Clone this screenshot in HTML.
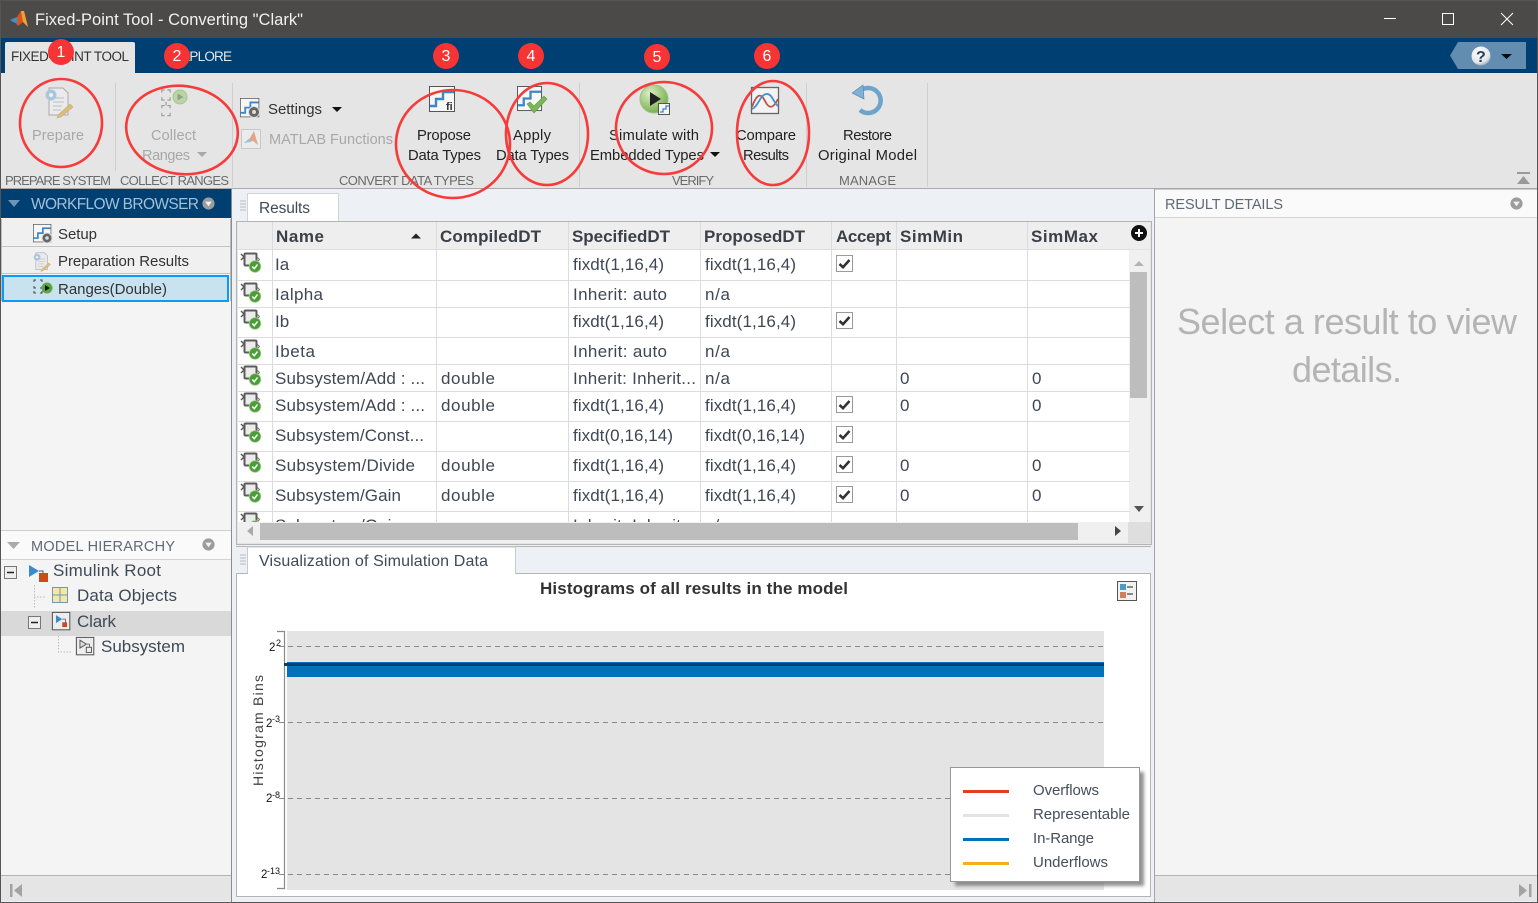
<!DOCTYPE html>
<html><head><meta charset="utf-8"><title>Fixed-Point Tool</title>
<style>html,body{margin:0;padding:0;background:#edf0f5;overflow:hidden}svg{display:block;font-family:"Liberation Sans",sans-serif}</style>
</head><body>
<svg xmlns="http://www.w3.org/2000/svg" width="1538" height="903" viewBox="0 0 1538 903">
<defs>
<symbol id="ri" viewBox="0 0 22 22" overflow="visible">
<path d="M1 2l3 3-3 3" fill="none" stroke="#555" stroke-width="1.400"/>
<rect x="4.500" y="1.500" width="12" height="12" rx="1" fill="#ececec" stroke="#5c5c5c" stroke-width="2"/>
<path d="M17 5l2.500 2.500-2.500 2.500" fill="none" stroke="#777"/>
<circle cx="15" cy="14.500" r="5.800" fill="#4a9e38" stroke="#a9cf92" stroke-width=".8"/>
<path d="M12.300 14.500l2 2.200 3.200-4.200" fill="none" stroke="#fff" stroke-width="1.500"/>
</symbol>
<symbol id="cb" viewBox="0 0 18 18" overflow="visible">
<rect x=".5" y=".5" width="16" height="16" fill="#fff" stroke="#9a9a9a"/>
<path d="M3.500 9l3.500 3.200 6.500-7.200" fill="none" stroke="#333" stroke-width="2.600"/>
</symbol>
<symbol id="stp" viewBox="0 0 27 27" overflow="visible">
<rect x=".5" y=".5" width="25" height="25" fill="#f7f7f7" stroke="#555"/>
<path d="M1 20h6v-7h7V6h11" fill="none" stroke="#3d86c8" stroke-width="2.400"/>
</symbol>
<symbol id="tdn" viewBox="0 0 16 16" overflow="visible">
<circle cx="8" cy="8" r="6.500" fill="#9c9c9c"/><path d="M4.500 6h7L8 11z" fill="#f2f2f2"/>
</symbol>
<symbol id="doc" viewBox="0 0 32 34" overflow="visible">
<path d="M6 3h14l5 5v22H6z" fill="#e9ebee" stroke="#aaa"/>
<path d="M10 13h11M10 17h11M10 21h9M10 25h8" stroke="#bcbcbc"/>
<circle cx="8" cy="10" r="5.500" fill="#a9c6dc"/><circle cx="8" cy="10" r="2" fill="#eef0f2"/>
<path d="M15 30l12-11 3 3-12 10-4 1z" fill="#ddbd7e" stroke="#c8ad77" stroke-width=".6"/>
</symbol>
<symbol id="rng" viewBox="0 0 30 30" overflow="visible">
<path d="M2 4V1h3M8 1h3v3M2 9v3h3M8 12h3V9M6.500 14v4M2 21v-3h3M8 18h3v3M2 26v3h3M8 29h3v-3" transform="scale(.92)" fill="none" stroke="#999" stroke-width="1.200"/>
<circle cx="20" cy="8" r="7" fill="#b9d5a3" stroke="#a8c495"/><path d="M17.500 4.500l6 3.500-6 3.500z" fill="#969e90"/>
</symbol>
<symbol id="mdl" viewBox="0 0 24 24" overflow="visible">
<rect x=".5" y=".5" width="22" height="22" fill="#ededed" stroke="#555" stroke-width="1.300"/>
<path d="M5 4l8 5-8 5z" fill="#3a8cc9"/><path d="M13 9h4v5" fill="none" stroke="#555"/>
<rect x="13" y="13" width="6" height="6" fill="#c8491f"/>
</symbol>
<symbol id="sub" viewBox="0 0 24 24" overflow="visible">
<rect x=".5" y=".5" width="22" height="22" fill="#ededed" stroke="#555" stroke-width="1.300"/>
<path d="M5 4l8 5-8 5z" fill="#ddd" stroke="#555" stroke-width="1.200"/><path d="M13 9h4v5" fill="none" stroke="#555"/>
<rect x="13" y="13" width="6.500" height="6.500" fill="#eee" stroke="#555" stroke-width="1.200"/>
</symbol>
<radialGradient id="hp" cx=".4" cy=".3" r=".8"><stop offset="0" stop-color="#fff"/><stop offset=".7" stop-color="#dfe6ec"/><stop offset="1" stop-color="#7e8a94"/></radialGradient>
<radialGradient id="pl" cx=".35" cy=".3" r=".8"><stop offset="0" stop-color="#dcefc6"/><stop offset="1" stop-color="#6aa83f"/></radialGradient>
</defs>

<!-- frame -->
<rect width="1538" height="903" fill="#edf0f5"/>
<!-- title -->
<rect width="1538" height="38" fill="#4c4a48"/>
<polygon points="10,20 17,17 21,11 24,11 28,27 23,22 18,26 15,22" fill="#d9541a"/>
<polygon points="10,20 17,17 18,22 15,23" fill="#3f8fcb"/>
<polygon points="21,11 24,11 28,27 23,22" fill="#f2a035"/>
<text x="35" y="25" font-size="16.500" fill="#f1f1f1" textLength="268" lengthAdjust="spacing">Fixed-Point Tool - Converting "Clark"</text>
<path d="M1384 18.500h12" stroke="#fff" stroke-width="1"/>
<rect x="1442.500" y="13.500" width="11" height="11" fill="none" stroke="#fff" stroke-width="1"/>
<path d="M1501 13l12 12M1513 13l-12 12" stroke="#fff" stroke-width="1"/>
<!-- tab strip -->
<rect y="38" width="1538" height="35" fill="#003f72"/>
<path d="M5 73V44a2 2 0 0 1 2-2h126a2 2 0 0 1 2 2v29z" fill="#e5e5e5"/>
<text x="11" y="61" font-size="13.500" fill="#333" textLength="118" lengthAdjust="spacing">FIXED-POINT TOOL</text>
<text x="173" y="61" font-size="13.500" fill="#dfe8f0" textLength="59" lengthAdjust="spacing">EXPLORE</text>
<polygon points="1458,42 1526,42 1526,69 1458,69 1450,55.500" fill="#628cb0"/>
<circle cx="1481" cy="56" r="9.500" fill="url(#hp)"/>
<text x="1476" y="62" font-size="16" font-weight="bold" fill="#2c3e50">?</text>
<path d="M1501 54h11l-5.500 5z" fill="#0b0b0b"/>
<!-- ribbon -->
<rect y="73" width="1538" height="115" fill="#e5e5e5"/>
<rect y="188" width="1538" height="1.500" fill="#a9a9a9"/>
<path d="M115.500 83v88M232.500 83v104M579.500 83v104M806.500 83v104M927.500 83v104" stroke="#cfcfcf"/>
<use href="#doc" x="43" y="85" width="32" height="34"/>
<use href="#rng" x="160" y="89" width="30" height="30"/>
<g font-size="14.500" fill="#a8a8a8">
<text x="32" y="140" textLength="52" lengthAdjust="spacing">Prepare</text>
<text x="151" y="140" textLength="45" lengthAdjust="spacing">Collect</text>
<text x="142" y="160" textLength="48" lengthAdjust="spacing">Ranges</text>
<text x="269" y="144" textLength="124" lengthAdjust="spacing">MATLAB Functions</text>
</g>
<path d="M197 152h10l-5 5z" fill="#a8a8a8"/>
<use href="#stp" x="240" y="98" width="20" height="20"/>
<circle cx="254" cy="112" r="5.500" fill="#666" stroke="#ddd"/><circle cx="254" cy="112" r="2" fill="#ddd"/>
<text x="268" y="114" font-size="15" fill="#333" textLength="54" lengthAdjust="spacing">Settings</text>
<path d="M332 107h10l-5 5z" fill="#111"/>
<rect x="241.500" y="129.500" width="19" height="19" fill="#ececec" stroke="#c8c8c8"/>
<polygon points="244,143 250,138 254,131 258,145 253,141" fill="#e0a58a"/><polygon points="244,143 250,138 251,142" fill="#9cc0dc"/>
<use href="#stp" x="429" y="86" width="27" height="27"/>
<text x="446" y="110" font-size="11" font-weight="bold" fill="#333">fi</text>
<use href="#stp" x="517" y="86" width="26" height="26"/>
<path d="M527 104l7 9 13-14-3-3-10 10-4-4z" fill="#7cb65a" stroke="#5e9b45" stroke-width=".6"/>
<circle cx="654" cy="99" r="14" fill="url(#pl)" stroke="#9ec07f"/>
<path d="M650 92l11 7-11 7z" fill="#222"/>
<rect x="658.500" y="103.500" width="11" height="11" fill="#f4f4f4" stroke="#555"/>
<path d="M660 112h3v-3h3v-3h3" fill="none" stroke="#3d86c8" stroke-width="1.300"/>
<rect x="751.500" y="87.500" width="27" height="26" fill="#f3f3f3" stroke="#666" stroke-width="1.300"/>
<path d="M752 107c5-14 9-14 13-6s8 8 13-2" fill="none" stroke="#c0504d" stroke-width="1.800"/>
<path d="M752 109c6-2 8-14 14-15s7 8 12 12" fill="none" stroke="#4a90c8" stroke-width="1.800"/>
<path d="M859 92A12.500 12.500 0 1 1 860 110" fill="none" stroke="#6ea3cc" stroke-width="4.500"/>
<polygon points="852,93 863,85 864,99" fill="#7fb0d6" stroke="#5b8bb0" stroke-width=".7"/>
<g font-size="14.800" fill="#222">
<text x="417" y="140" textLength="54" lengthAdjust="spacing">Propose</text>
<text x="408" y="160" textLength="73" lengthAdjust="spacing">Data Types</text>
<text x="513" y="140" textLength="38" lengthAdjust="spacing">Apply</text>
<text x="496" y="160" textLength="73" lengthAdjust="spacing">Data Types</text>
<text x="609" y="140" textLength="90" lengthAdjust="spacing">Simulate with</text>
<text x="590" y="160" textLength="114" lengthAdjust="spacing">Embedded Types</text>
<text x="736" y="140" textLength="60" lengthAdjust="spacing">Compare</text>
<text x="743" y="160" textLength="46" lengthAdjust="spacing">Results</text>
<text x="843" y="140" textLength="49" lengthAdjust="spacing">Restore</text>
<text x="818" y="160" textLength="99" lengthAdjust="spacing">Original Model</text>
</g>
<path d="M710 152h10l-5 5z" fill="#111"/>
<g font-size="13" fill="#6a6a6a">
<text x="5" y="185" textLength="106" lengthAdjust="spacing">PREPARE SYSTEM</text>
<text x="120" y="185" textLength="109" lengthAdjust="spacing">COLLECT RANGES</text>
<text x="339" y="185" textLength="135" lengthAdjust="spacing">CONVERT DATA TYPES</text>
<text x="672" y="185" textLength="42" lengthAdjust="spacing">VERIFY</text>
<text x="839" y="185" textLength="57" lengthAdjust="spacing">MANAGE</text>
</g>
<path d="M1517 172h13v2h-13zM1523.500 176l6.500 8h-13z" fill="#9a9a9a"/>

<!-- left panel -->
<rect x="1" y="189" width="230" height="686" fill="#f4f4f4"/>
<rect x="1" y="189" width="230" height="29" fill="#003f72"/>
<path d="M8 200h12l-6 7z" fill="#6d95b7"/>
<text x="31" y="209" font-size="15.500" fill="#a4bfd6" textLength="168" lengthAdjust="spacing">WORKFLOW BROWSER</text>
<use href="#tdn" x="201" y="196" width="15" height="15"/>
<rect x="2" y="219" width="228" height="27.500" fill="#f0f0f0"/>
<rect x="2" y="247" width="228" height="27" fill="#f0f0f0"/>
<path d="M2 246.500h228M2 273.500h228" stroke="#c4c4c4"/>
<rect x="3" y="276" width="225" height="25" fill="#c9e2f0" stroke="#0a9bf5" stroke-width="2"/>
<path d="M1.500 219v82M230.500 219v82" stroke="#bbb"/>
<use href="#stp" x="33" y="224" width="19" height="19"/>
<circle cx="47" cy="238" r="5" fill="#666" stroke="#ddd"/><circle cx="47" cy="238" r="1.800" fill="#ddd"/>
<use href="#doc" x="32" y="251" width="20" height="21"/>
<path d="M34 282v-2h2M40 280h2v2M34 286v2h2M40 288h2v-2M34 291v2h2M40 293h2v-2" fill="none" stroke="#444"/>
<circle cx="47" cy="288" r="5.500" fill="#5aa83f"/><path d="M45 285l5 3-5 3z" fill="#111"/>
<g font-size="15" fill="#333">
<text x="58" y="239" textLength="39" lengthAdjust="spacing">Setup</text>
<text x="58" y="266" textLength="131" lengthAdjust="spacing">Preparation Results</text>
<text x="58" y="294" textLength="109" lengthAdjust="spacing">Ranges(Double)</text>
</g>
<path d="M1 530.500h230" stroke="#cfcfcf"/>
<rect x="1" y="531" width="230" height="28" fill="#fafafa"/>
<path d="M1 559.500h230" stroke="#d4d4d4"/>
<path d="M7 542h13l-6.500 7z" fill="#aaa"/>
<text x="31" y="551" font-size="14.500" fill="#5f6a78" textLength="144" lengthAdjust="spacing">MODEL HIERARCHY</text>
<use href="#tdn" x="201" y="537" width="15" height="15"/>
<rect x="1" y="611" width="230" height="25" fill="#d9d9d9"/>
<g>
<rect x="4.500" y="566.500" width="12" height="12" fill="#eee" stroke="#777"/><path d="M7 572.500h7" stroke="#222" stroke-width="1.500"/>
<rect x="28.500" y="616.500" width="12" height="12" fill="#eee" stroke="#777"/><path d="M31 622.500h7" stroke="#222" stroke-width="1.500"/>
<path d="M29 565l10 6-10 6z" fill="#3a8cc9"/><path d="M39 571h4v4" fill="none" stroke="#555"/><rect x="39" y="573" width="9" height="9" fill="#cc4a1c"/>
<path d="M34.500 585v24M34 597h12M58.500 636v16h13" fill="none" stroke="#bbb" stroke-dasharray="1.500 1.500"/>
<rect x="52.500" y="587.500" width="15" height="15" fill="#f7e6a4" stroke="#6a9ac0"/><path d="M60 588v15M53 595h15" stroke="#6a9ac0"/>
<use href="#mdl" x="52" y="612" width="19" height="19"/>
<use href="#sub" x="76" y="637" width="19" height="19"/>
</g>
<g font-size="17" fill="#3e4a58">
<text x="53" y="576" textLength="108" lengthAdjust="spacing">Simulink Root</text>
<text x="77" y="601" textLength="100" lengthAdjust="spacing">Data Objects</text>
<text x="77" y="627" textLength="39" lengthAdjust="spacing">Clark</text>
<text x="101" y="652" textLength="84" lengthAdjust="spacing">Subsystem</text>
</g>
<rect x="1" y="875" width="230" height="26" fill="#e5e5e5"/>
<path d="M1 875.500h230" stroke="#b5b5b5"/>
<path d="M10 884h2.500v13H10zM22 884v13l-8-6.500z" fill="#a3a3a3"/>
<path d="M231.500 189v713" stroke="#8c8c8c"/>

<!-- center: results -->
<rect x="232" y="189" width="922" height="714" fill="#edf0f5"/>
<rect x="247.500" y="193.500" width="91" height="29" fill="#fff" stroke="#d0d4da"/>
<path d="M240 201h6M240 204h6M240 207h6M240 210h6" stroke="#b7bcc2"/>
<text x="259" y="213" font-size="15.500" fill="#3e4a58" textLength="51" lengthAdjust="spacing">Results</text>
<rect x="236.500" y="221.500" width="915" height="323" fill="#e4e4e4" stroke="#b4b4b4"/>
<rect x="238" y="222" width="912" height="27" fill="#eeeeee"/>
<rect x="238" y="250" width="891" height="272" fill="#fff"/>
<rect x="1129" y="250" width="21" height="272" fill="#f0f0f0"/>
<g stroke="#dcdcdc">
<path d="M238 249.500h892M238 280.500h892M238 307.500h892M238 337.500h892M238 364.500h892M238 391.500h892M238 421.500h892M238 451.500h892M238 481.500h892M238 511.500h892"/>
<path d="M272.500 222v300M436.500 222v300M568.500 222v300M700.500 222v300M831.500 222v300M896.500 222v300M1027.500 222v300"/>
</g>
<g font-size="17" font-weight="bold" fill="#3a3f48">
<text x="276" y="242" textLength="48" lengthAdjust="spacing">Name</text>
<text x="440" y="242" textLength="101" lengthAdjust="spacing">CompiledDT</text>
<text x="572" y="242" textLength="98" lengthAdjust="spacing">SpecifiedDT</text>
<text x="704" y="242" textLength="101" lengthAdjust="spacing">ProposedDT</text>
<text x="836" y="242" textLength="55" lengthAdjust="spacing">Accept</text>
<text x="900" y="242" textLength="63" lengthAdjust="spacing">SimMin</text>
<text x="1031" y="242" textLength="67" lengthAdjust="spacing">SimMax</text>
</g>
<path d="M411 238.500h10l-5-5z" fill="#222"/>
<circle cx="1139" cy="233" r="8" fill="#111"/><path d="M1135 233h8M1139 229v8" stroke="#fff" stroke-width="2"/>
<use href="#ri" x="240" y="252" width="22" height="22"/>
<use href="#ri" x="240" y="282" width="22" height="22"/>
<use href="#ri" x="240" y="309" width="22" height="22"/>
<use href="#ri" x="240" y="339" width="22" height="22"/>
<use href="#ri" x="240" y="365" width="22" height="22"/>
<use href="#ri" x="240" y="392" width="22" height="22"/>
<use href="#ri" x="240" y="422" width="22" height="22"/>
<use href="#ri" x="240" y="452" width="22" height="22"/>
<use href="#ri" x="240" y="482" width="22" height="22"/>
<g font-size="17" fill="#3e4753">
<text x="275" y="270">Ia</text>
<text x="275" y="300" textLength="48" lengthAdjust="spacing">Ialpha</text>
<text x="275" y="327">Ib</text>
<text x="275" y="357" textLength="40" lengthAdjust="spacing">Ibeta</text>
<text x="275" y="384" textLength="150" lengthAdjust="spacing">Subsystem/Add : ...</text>
<text x="275" y="411" textLength="150" lengthAdjust="spacing">Subsystem/Add : ...</text>
<text x="275" y="441" textLength="149" lengthAdjust="spacing">Subsystem/Const...</text>
<text x="275" y="471" textLength="140" lengthAdjust="spacing">Subsystem/Divide</text>
<text x="275" y="501" textLength="126" lengthAdjust="spacing">Subsystem/Gain</text>
<text x="441" y="384" textLength="54" lengthAdjust="spacing">double</text>
<text x="441" y="411" textLength="54" lengthAdjust="spacing">double</text>
<text x="441" y="471" textLength="54" lengthAdjust="spacing">double</text>
<text x="441" y="501" textLength="54" lengthAdjust="spacing">double</text>
<text x="573" y="270" textLength="91" lengthAdjust="spacing">fixdt(1,16,4)</text>
<text x="573" y="300" textLength="94" lengthAdjust="spacing">Inherit: auto</text>
<text x="573" y="327" textLength="91" lengthAdjust="spacing">fixdt(1,16,4)</text>
<text x="573" y="357" textLength="94" lengthAdjust="spacing">Inherit: auto</text>
<text x="573" y="384" textLength="123" lengthAdjust="spacing">Inherit: Inherit...</text>
<text x="573" y="411" textLength="91" lengthAdjust="spacing">fixdt(1,16,4)</text>
<text x="573" y="441" textLength="100" lengthAdjust="spacing">fixdt(0,16,14)</text>
<text x="573" y="471" textLength="91" lengthAdjust="spacing">fixdt(1,16,4)</text>
<text x="573" y="501" textLength="91" lengthAdjust="spacing">fixdt(1,16,4)</text>
<text x="705" y="270" textLength="91" lengthAdjust="spacing">fixdt(1,16,4)</text>
<text x="705" y="300" textLength="25" lengthAdjust="spacing">n/a</text>
<text x="705" y="327" textLength="91" lengthAdjust="spacing">fixdt(1,16,4)</text>
<text x="705" y="357" textLength="25" lengthAdjust="spacing">n/a</text>
<text x="705" y="384" textLength="25" lengthAdjust="spacing">n/a</text>
<text x="705" y="411" textLength="91" lengthAdjust="spacing">fixdt(1,16,4)</text>
<text x="705" y="441" textLength="100" lengthAdjust="spacing">fixdt(0,16,14)</text>
<text x="705" y="471" textLength="91" lengthAdjust="spacing">fixdt(1,16,4)</text>
<text x="705" y="501" textLength="91" lengthAdjust="spacing">fixdt(1,16,4)</text>
<text x="900" y="384">0</text><text x="900" y="411">0</text><text x="900" y="471">0</text><text x="900" y="501">0</text>
<text x="1032" y="384">0</text><text x="1032" y="411">0</text><text x="1032" y="471">0</text><text x="1032" y="501">0</text>
</g>
<use href="#cb" x="836" y="255" width="18" height="18"/>
<use href="#cb" x="836" y="312" width="18" height="18"/>
<use href="#cb" x="836" y="396" width="18" height="18"/>
<use href="#cb" x="836" y="426" width="18" height="18"/>
<use href="#cb" x="836" y="456" width="18" height="18"/>
<use href="#cb" x="836" y="486" width="18" height="18"/>
<!-- clipped last row -->
<svg x="238" y="512" width="891" height="10" viewBox="238 512 891 10">
<use href="#ri" x="240" y="512" width="22" height="22"/>
<g font-size="17" fill="#3e4753"><text x="275" y="531" textLength="126" lengthAdjust="spacing">Subsystem/Gain</text>
<text x="573" y="531" textLength="123" lengthAdjust="spacing">Inherit: Inherit...</text><text x="705" y="531">n/a</text></g>
</svg>
<!-- v scroll -->
<rect x="1130" y="272" width="17" height="126" fill="#bdbdbd"/>
<path d="M1134 266h10l-5-5z" fill="#b3b3b3"/>
<path d="M1134 506h10l-5 6z" fill="#555"/>
<!-- h scroll -->
<rect x="238" y="522" width="891" height="21" fill="#f0f0f0"/>
<rect x="1128" y="522" width="23" height="21" fill="#dedede"/>
<rect x="260" y="523" width="818" height="17" fill="#bdbdbd"/>
<path d="M253 526v10l-6-5z" fill="#aaa"/>
<path d="M1115 526v10l6-5z" fill="#444"/>

<!-- visualisation -->
<path d="M236 546.500h915" stroke="#b4b4b4"/>
<rect x="236" y="547" width="916" height="27" fill="#edf0f5"/>
<rect x="236.500" y="573.500" width="914" height="323" fill="#fff" stroke="#b4b4b4"/>
<path d="M247.500 573V547h268v27" fill="#fff" stroke="#c6cbd2"/>
<rect x="248" y="570" width="267" height="5" fill="#fff"/>
<path d="M240 555h6M240 558h6M240 561h6M240 564h6" stroke="#b7bcc2"/>
<text x="259" y="566" font-size="16" fill="#3e4a58" textLength="229" lengthAdjust="spacing">Visualization of Simulation Data</text>
<text x="540" y="594" font-size="17" font-weight="bold" fill="#333" textLength="308" lengthAdjust="spacing">Histograms of all results in the model</text>
<rect x="1117.500" y="581.500" width="19" height="19" fill="#f1f1f1" stroke="#555"/>
<rect x="1120" y="584" width="6" height="6" fill="#4a9cc9"/><rect x="1120" y="592" width="6" height="6" fill="#d1805c"/>
<path d="M1127 587h6M1127 594h6" stroke="#666" stroke-width="1.400"/>
<!-- plot -->
<rect x="287" y="631" width="817" height="259" fill="#e4e4e4"/>
<path d="M277 631.500h7.500v257H277" fill="none" stroke="#8a8a8a" stroke-width="1.200"/>
<g stroke="#8a8a8a" stroke-dasharray="5 4"><path d="M279 646.500h825M279 722.500h825M279 798.500h825M279 874.500h825"/></g>
<rect x="287" y="662" width="817" height="15" fill="#0072bd"/>
<rect x="284" y="663" width="820" height="3" fill="#00406e"/>
<g fill="#111">
<text x="269" y="651" font-size="11.500">2</text><text x="276" y="646" font-size="9">2</text>
<text x="266" y="727" font-size="11.500">2</text><text x="272" y="722" font-size="9">-3</text>
<text x="266" y="802" font-size="11.500">2</text><text x="272" y="798" font-size="9">-8</text>
<text x="261" y="878" font-size="11.500">2</text><text x="267" y="874" font-size="9">-13</text>
</g>
<text transform="translate(263,786) rotate(-90)" font-size="14" fill="#444" textLength="111" lengthAdjust="spacing">Histogram Bins</text>
<!-- legend -->
<rect x="955" y="772" width="189" height="114" fill="#6f6f6f" opacity=".75" style="filter:blur(1.500px)"/>
<rect x="950.500" y="767.500" width="189" height="114" fill="#fff" stroke="#999"/>
<path d="M963 791.500h46" stroke="#e23b26" stroke-width="3"/>
<path d="M963 815.500h46" stroke="#e3e3e3" stroke-width="3"/>
<path d="M963 839.500h46" stroke="#0072bd" stroke-width="3"/>
<path d="M963 863.500h46" stroke="#f2b01e" stroke-width="3"/>
<g font-size="15" fill="#454e5a">
<text x="1033" y="795" textLength="66" lengthAdjust="spacing">Overflows</text>
<text x="1033" y="819" textLength="97" lengthAdjust="spacing">Representable</text>
<text x="1033" y="843" textLength="61" lengthAdjust="spacing">In-Range</text>
<text x="1033" y="867" textLength="75" lengthAdjust="spacing">Underflows</text>
</g>

<!-- right panel -->
<path d="M1154.500 189v713" stroke="#a5a5a5"/>
<rect x="1155" y="190" width="382" height="685" fill="#f4f4f4"/>
<rect x="1155" y="190" width="382" height="27" fill="#fafafa"/>
<path d="M1155 217.500h382" stroke="#d4d4d4"/>
<text x="1165" y="209" font-size="14.500" fill="#5f6a78" textLength="118" lengthAdjust="spacing">RESULT DETAILS</text>
<use href="#tdn" x="1509" y="196" width="15" height="15"/>
<g font-size="36" fill="#b4b4b4">
<text x="1177" y="334" textLength="340" lengthAdjust="spacing">Select a result to view</text>
<text x="1292" y="382" textLength="110" lengthAdjust="spacing">details.</text>
</g>
<rect x="1155" y="875" width="382" height="26" fill="#e5e5e5"/>
<path d="M1155 875.500h382" stroke="#b5b5b5"/>
<path d="M1519 884v13l8-6.500zM1529 884h2.500v13H1529z" fill="#a3a3a3"/>

<!-- window border -->
<rect x=".5" y=".5" width="1537" height="902" fill="none" stroke="#555"/>

<!-- annotations -->
<g fill="none" stroke="#f73a3a" stroke-width="2.600">
<ellipse cx="61" cy="123" rx="41" ry="44"/>
<ellipse cx="182" cy="130" rx="56" ry="44" transform="rotate(8 182 130)"/>
<ellipse cx="453" cy="144" rx="57" ry="54"/>
<ellipse cx="547" cy="134" rx="41" ry="51"/>
<ellipse cx="664" cy="128" rx="48" ry="46"/>
<ellipse cx="773" cy="133" rx="36" ry="52"/>
</g>
<g fill="#f63434">
<circle cx="61" cy="52" r="13"/><circle cx="177" cy="56" r="13"/><circle cx="446" cy="56" r="13"/>
<circle cx="531" cy="56" r="13"/><circle cx="657" cy="57" r="13"/><circle cx="767" cy="56" r="13"/>
</g>
<g font-size="16" fill="#fff" text-anchor="middle">
<text x="61" y="57">1</text><text x="177" y="61">2</text><text x="446" y="61">3</text>
<text x="531" y="61">4</text><text x="657" y="62">5</text><text x="767" y="61">6</text>
</g>
</svg>
</body></html>
